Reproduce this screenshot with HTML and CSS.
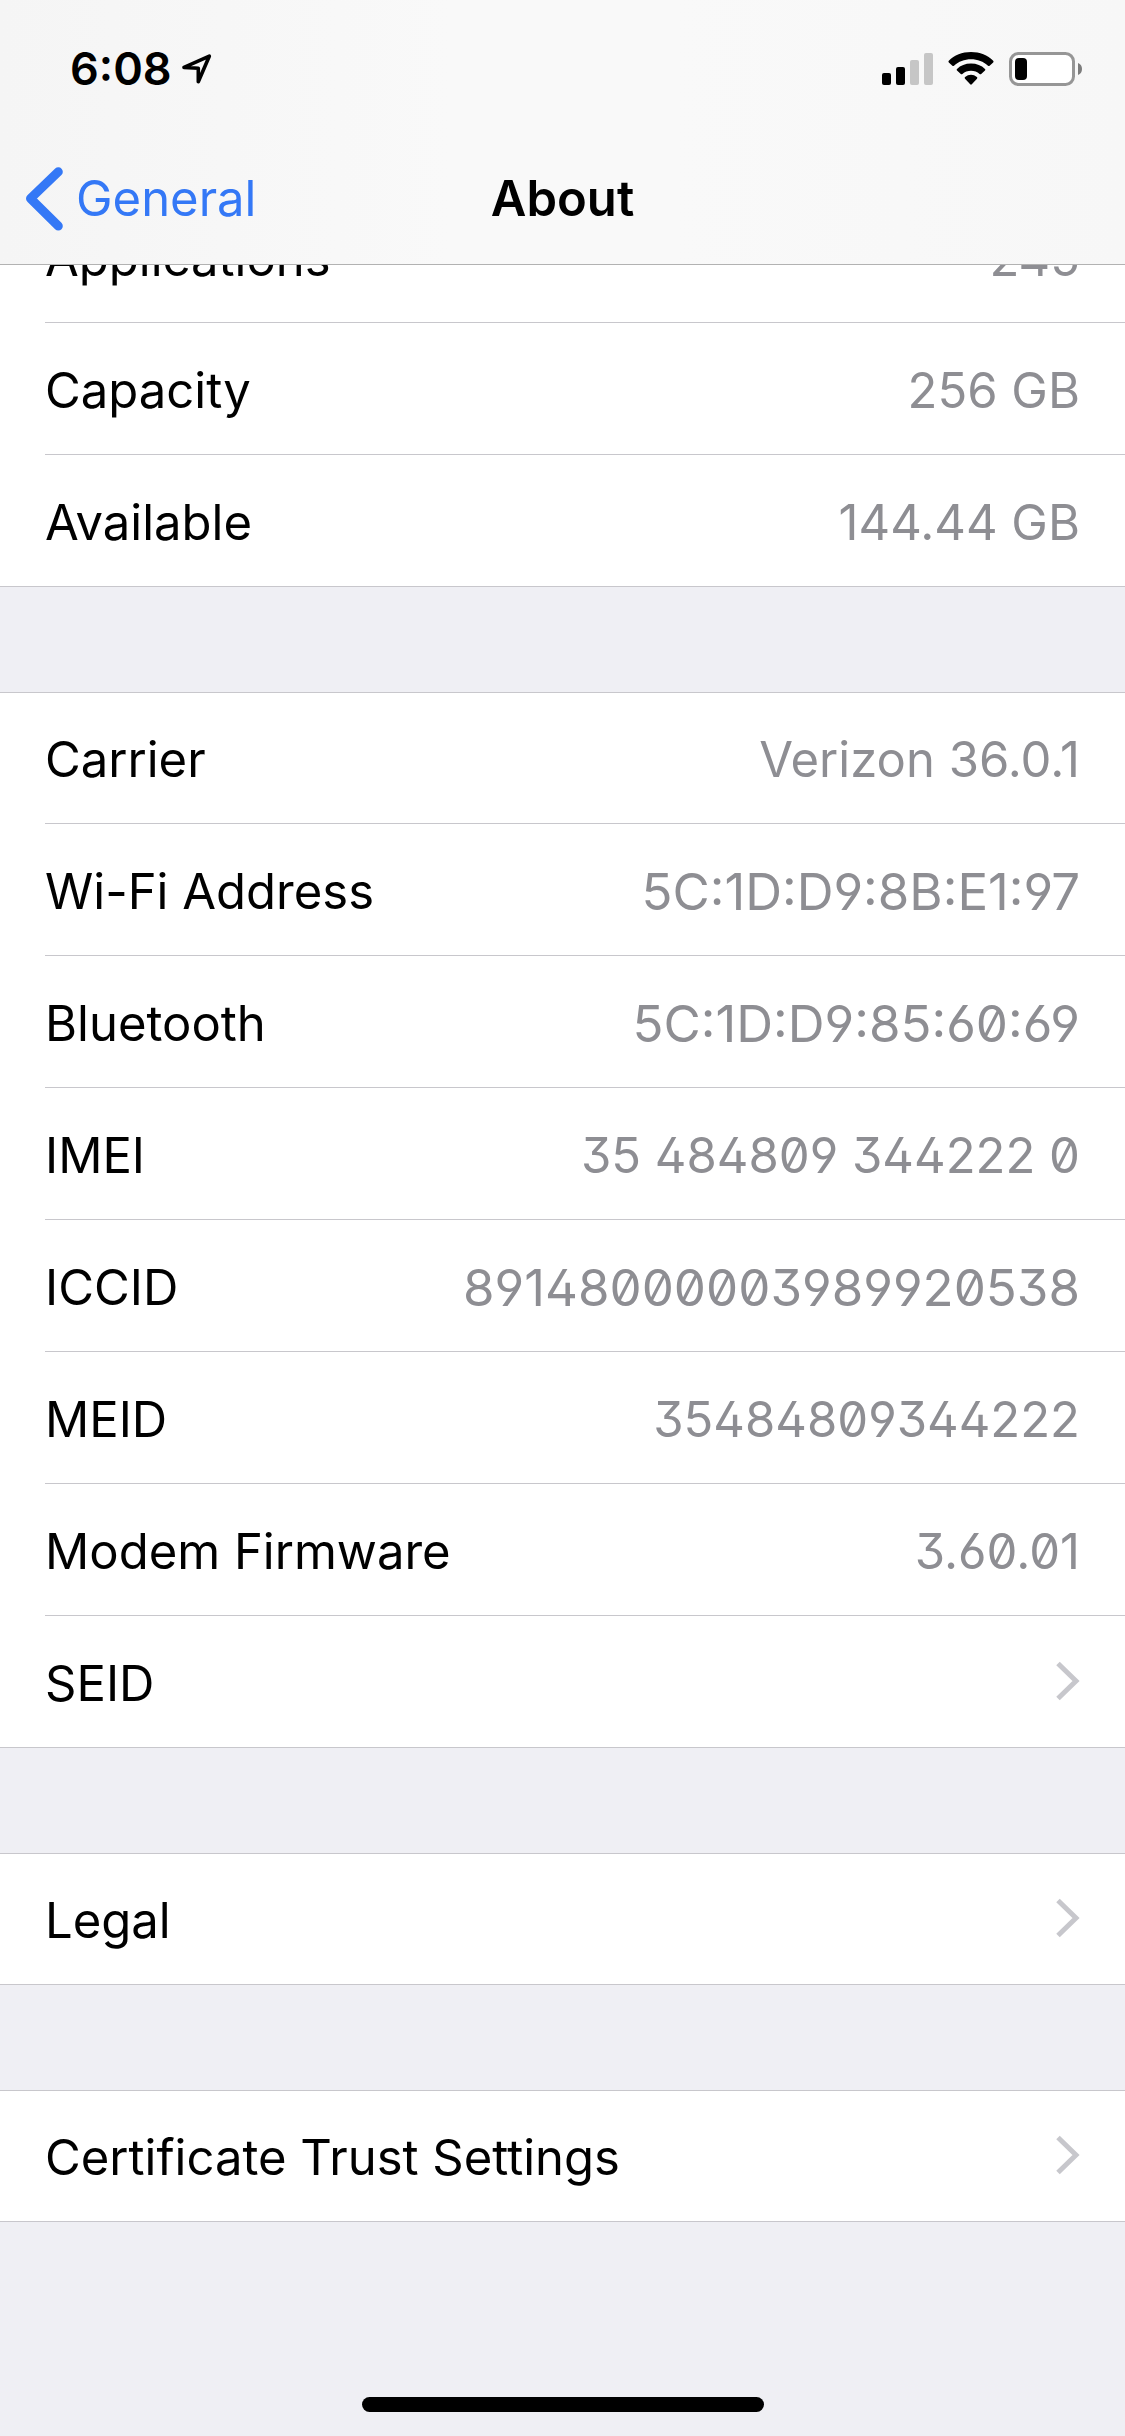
FILE: index.html
```html
<!DOCTYPE html>
<html lang="en">
<head>
<meta charset="utf-8">
<meta name="viewport" content="width=device-width">
<title>About</title>
<link rel="stylesheet" href="styles.css">
</head>
<body>
<header class="top">
  <div class="status">
    <div class="status-side">
      <span class="time">6:08</span>
      <svg class="location" width="30" height="31" viewBox="0 0 30 31" aria-hidden="true"><path d="M2 13.400 27.300 2.200 16.300 27.700V14.200Z" fill="none" stroke="#000" stroke-width="3.600" stroke-linejoin="round"/></svg>
    </div>
    <div class="status-side status-right">
      <svg width="51" height="34" viewBox="0 0 51 34" aria-hidden="true"><rect y="21" width="9" height="12" rx="2"/><rect x="14" y="15" width="9" height="18" rx="2"/><rect x="28" y="8" width="9" height="25" rx="2" fill="#c6c6c6"/><rect x="42" y="1" width="9" height="32" rx="2" fill="#c6c6c6"/></svg>
      <svg width="46" height="34" viewBox="0 0 46 34" aria-hidden="true"><path d="M23 0C31.800 0 39.800 3.300 45.200 8.800Q46 9.600 45.200 10.400L41.600 13.700Q40.800 14.400 40 13.700C35.500 9.500 29.500 7.200 23 7.200S10.500 9.500 6 13.700Q5.200 14.400 4.400 13.700L.8 10.400Q0 9.600.8 8.800C6.200 3.300 14.200 0 23 0Z"/><path d="M23 11.400C28.700 11.400 33.400 13.300 37 16.900Q37.800 17.700 37 18.500L33.200 22Q32.400 22.700 31.600 22C29.200 19.900 26.300 18.800 23 18.800S16.800 19.900 14.400 22Q13.600 22.700 12.800 22L9 18.500Q8.200 17.700 9 16.900C12.600 13.300 17.300 11.400 23 11.400Z"/><path d="M23 22.800Q26.200 22.800 28.900 25Q29.800 25.800 29 26.700L23.800 32.300Q23 33.200 22.200 32.300L17 26.700Q16.200 25.800 17.100 25Q19.800 22.800 23 22.800Z"/></svg>
      <svg width="73" height="34" viewBox="0 0 73 34" aria-hidden="true"><rect x="1.500" y="1.500" width="63" height="31" rx="8" fill="#fff" stroke="#969696" stroke-width="3"/><rect x="6" y="6" width="12" height="22" rx="4"/><path d="M69 11Q73 12.500 73 17T69 23Z" fill="#7c7c7c"/></svg>
    </div>
  </div>
  <nav class="nav">
    <a class="back" href="#general">
      <svg width="37" height="64" viewBox="0 0 37 64" aria-hidden="true"><path d="M32.300 4.800 4.500 31.500 32.300 59" fill="none" stroke="#3478f6" stroke-width="9" stroke-linecap="round" stroke-linejoin="round"/></svg>
      <span>General</span>
    </a>
    <h1 class="title">About</h1>
  </nav>
</header>
<main class="content">
  <ul class="group">
    <li class="row"><span class="label">Applications</span><span class="value">245</span></li>
    <li class="row"><span class="label">Capacity</span><span class="value">256 GB</span></li>
    <li class="row"><span class="label">Available</span><span class="value">144.44 GB</span></li>
  </ul>
  <ul class="group">
    <li class="row"><span class="label">Carrier</span><span class="value">Verizon 36.0.1</span></li>
    <li class="row"><span class="label">Wi-Fi Address</span><span class="value code large">5C:1D:D9:8B:E1:97</span></li>
    <li class="row"><span class="label">Bluetooth</span><span class="value code large">5C:1D:D9:85:60:69</span></li>
    <li class="row"><span class="label">IMEI</span><span class="value code">35 484809 344222 0</span></li>
    <li class="row"><span class="label">ICCID</span><span class="value code large">89148000003989920538</span></li>
    <li class="row"><span class="label">MEID</span><span class="value code">35484809344222</span></li>
    <li class="row"><span class="label">Modem Firmware</span><span class="value code">3.60.01</span></li>
    <li><a class="row" href="#seid"><span class="label">SEID</span><svg class="chevron" width="24" height="40" viewBox="0 0 24 40" aria-hidden="true"><path d="M2 2.500 20 20 2 37.500"/></svg></a></li>
  </ul>
  <ul class="group">
    <li><a class="row" href="#legal"><span class="label">Legal</span><svg class="chevron" width="24" height="40" viewBox="0 0 24 40" aria-hidden="true"><path d="M2 2.500 20 20 2 37.500"/></svg></a></li>
  </ul>
  <ul class="group">
    <li><a class="row" href="#certificates"><span class="label">Certificate Trust Settings</span><svg class="chevron" width="24" height="40" viewBox="0 0 24 40" aria-hidden="true"><path d="M2 2.500 20 20 2 37.500"/></svg></a></li>
  </ul>
</main>
<div class="home-indicator"></div>
</body>
</html>
```
FILE: styles.css
```css
* { box-sizing: border-box; }

body {
  margin: 0;
  background: #efeff4;
  color: #000;
  font-family: Inter, "Liberation Sans", sans-serif;
  font-size: 49px;
  line-height: 60px;
}

a { color: inherit; text-decoration: none; }

/* Header stays above the scrolled list */
.top {
  position: fixed;
  inset: 0 0 auto;
  z-index: 1;
  background: linear-gradient(90deg, #f5f5f5, #f9f9f9 40%, #f9f9f9 60%, #f7f7f7);
  border-bottom: 1px solid #b2b2b2;
}

.status {
  display: flex;
  justify-content: space-between;
  align-items: center;
  height: 132px;
  padding: 6px 43px 0 70px;
}

.status-side { display: flex; align-items: center; gap: 10px; }
.status-right { gap: 15px; }
.time { font-size: 45px; font-weight: 600; }

.nav {
  display: grid;
  grid-template-columns: 1fr auto 1fr;
  align-items: center;
  height: 132px;
  padding: 2px 26px 0;
}

.back {
  display: flex;
  align-items: center;
  gap: 13px;
  color: #3478f6;
}

.title { margin: 0; font-size: 49px; font-weight: 600; }

.content { padding-top: 191px; }

.group {
  margin: 0 0 105px;
  padding: 0;
  list-style: none;
  background: #fff;
  box-shadow: inset 0 1px #c8c7cc;
}

.row {
  display: flex;
  justify-content: space-between;
  align-items: center;
  height: 132px;
  margin-left: 45px;
  padding-right: 45px;
  border-bottom: 1px solid #c8c7cc;
}

/* The last rule of a group runs the full width */
.group > .row:last-child,
.group > :last-child > .row {
  margin-left: 0;
  padding-left: 45px;
}

.label, .value { padding-top: 4px; }
.value { color: #8e8e93; }
.code { font-feature-settings: "zero", "ss01"; }
.large { font-size: 51px; }

.chevron { margin-bottom: 2px; fill: none; stroke: #c7c7cc; stroke-width: 5; }

.home-indicator {
  position: fixed;
  bottom: 24px;
  left: calc(50% - 201px);
  z-index: 1;
  width: 402px;
  height: 15px;
  border-radius: 8px;
  background: #000;
}
```
